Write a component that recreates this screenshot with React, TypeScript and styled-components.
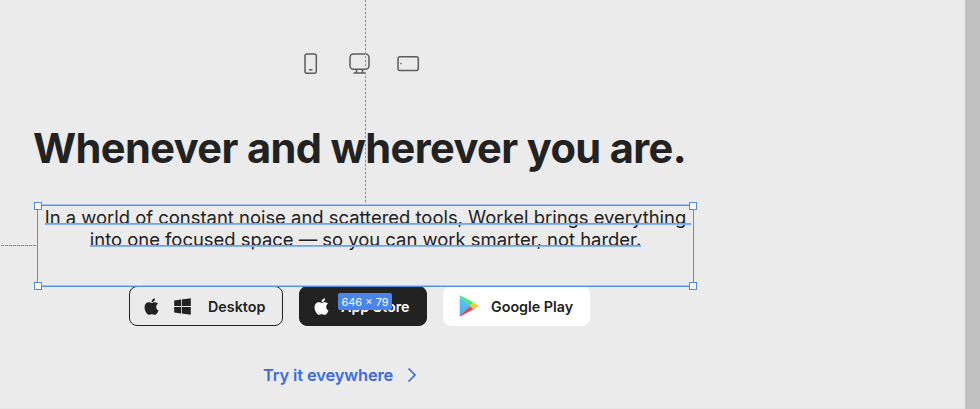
import React from "react";
import styled, { createGlobalStyle } from "styled-components";
import { FaApple, FaWindows } from "react-icons/fa";

const GlobalStyle = createGlobalStyle`
  *, *::before, *::after { box-sizing: border-box; }
  body { margin: 0; background: #ebebeb; font-family: Inter, sans-serif; overflow: hidden; }
`;

const Workspace = styled.div`
  display: flex;
  width: 980px;
  height: 409px;
  background: #c1c1c1;
`;

const Artboard = styled.main`
  position: relative;
  width: 965px;
  height: 409px;
  padding: 52px 0 0 34px;
  background: #ebebeb;
  color: #222;
`;

const Devices = styled.div`
  display: flex;
  align-items: center;
  height: 23px;
  padding-left: 269px;
  svg { display: block; }
`;

const Gap = styled.div<{ $w: number }>`
  width: ${(p) => p.$w}px;
`;

const Title = styled.h1`
  margin: 48px 0 0 -1px;
  height: 50px;
  font-size: 41.6px;
  line-height: 50px;
  font-weight: 700;
  letter-spacing: -0.62px;
  white-space: nowrap;
`;

const Selection = styled.section`
  position: relative;
  z-index: 2;
  margin: 32px 0 0 3px;
  width: 657px;
  height: 82px;
  border: 1px solid #4f91eb;
  box-shadow: 0 -1px 0 #a5c5f0, inset 0 -1px 0 #a5c5f0;
`;

const Handle = styled.i<{ $right?: boolean; $bottom?: boolean }>`
  position: absolute;
  width: 8px;
  height: 8px;
  background: #fff;
  border: 1px solid #4c8ee9;
  ${(p) => (p.$right ? "right: -4px;" : "left: -4px;")}
  ${(p) => (p.$bottom ? "bottom: -4px;" : "top: -4px;")}
`;

const Copy = styled.p`
  display: flex;
  flex-direction: column;
  align-items: center;
  margin: 0;
  font-size: 18.43px;
  line-height: 22.4px;
  font-weight: 420;
  white-space: nowrap;
`;

const Line = styled.span<{ $tail?: number }>`
  position: relative;
  &::after {
    content: "";
    position: absolute;
    left: 0;
    right: ${(p) => -(p.$tail ?? 0)}px;
    top: 17px;
    height: 2px;
    background: linear-gradient(#6ba3ee 50%, #86b3ef 50%);
  }
`;

const SizeBadge = styled.span`
  position: absolute;
  left: 300px;
  top: 87px;
  width: 54px;
  height: 17px;
  padding-top: 1px;
  border-radius: 2px;
  background: #4a86ea;
  color: #f4f8ff;
  font-size: 11px;
  line-height: 17px;
  text-align: center;
  white-space: nowrap;
`;

const Guide = styled.i<{ $vertical?: boolean }>`
  position: absolute;
  z-index: 1;
  ${(p) =>
    p.$vertical
      ? "left: 365px; top: 0; width: 1px; height: 205px; background: repeating-linear-gradient(to bottom, #5d94e4 0 2px, #cbdaf0 2px 4px);"
      : "left: 1px; top: 245px; width: 36px; height: 1px; background: repeating-linear-gradient(to right, #5d94e4 0 3px, #cbdaf0 3px 4px);"}
`;

const Stores = styled.div`
  display: flex;
  margin: -1px 0 0 95px;
  gap: 16px;
`;

const StoreButton = styled.button<{ $tone: "outline" | "dark" | "light"; $w: number }>`
  display: flex;
  align-items: center;
  width: ${(p) => p.$w}px;
  height: 40px;
  padding: 1px 0 0 ${(p) => (p.$tone === "light" ? 15 : 12)}px;
  border-radius: 8px;
  border: 1px solid ${(p) => (p.$tone === "light" ? "#fff" : "#222")};
  background: ${(p) => ({ outline: "transparent", dark: "#222", light: "#fff" })[p.$tone]};
  color: ${(p) => (p.$tone === "dark" ? "#fff" : "#222")};
  font: 600 14.3px/20px Inter, sans-serif;
  white-space: nowrap;
  svg { display: block; flex: none; margin-top: -1px; }
`;

const TryLink = styled.a`
  display: flex;
  align-items: center;
  margin: 38px 0 0 229px;
  height: 22px;
  color: #3d6be0;
  font-size: 16.5px;
  letter-spacing: -0.15px;
  line-height: 22px;
  font-weight: 600;
  white-space: nowrap;
`;

const BottomEdge = styled.div`
  position: absolute;
  left: 0;
  right: 0;
  bottom: 0;
  height: 1px;
  background: #e6e6e6;
`;

const PlayLogo = () => (
  <svg width="20" height="22" viewBox="0 0 20 22">
    <defs>
      <linearGradient id="sky" x1="0" y1="0" x2="0" y2="1">
        <stop offset="0" stopColor="#5bc8f7" />
        <stop offset="1" stopColor="#4aa9f0" />
      </linearGradient>
    </defs>
    <path d="M.7.9v20.2L10.7 11z" fill="url(#sky)" />
    <path d="M.7.9Q1.300.5 2 .8L14.300 7.600 10.700 11z" fill="#45e57d" />
    <path d="M14.300 7.600 18.800 10.200Q19.800 11 18.800 11.700L14.300 14.300 10.700 11z" fill="#fbc72c" />
    <path d="M.7 21.100Q1.200 21.500 2 21.200L14.300 14.300 10.700 11z" fill="#ee4452" />
  </svg>
);

export default function App() {
  return (
    <Workspace>
      <GlobalStyle />
      <Artboard>
        <Devices>
          <svg width="16" height="23" viewBox="0 0 16 23" fill="none" stroke="#5c5c5c" strokeWidth="1.5">
            <rect x="2" y="2" width="11.300" height="19.200" rx="2" />
            <path d="M6 17.800h3.500" />
          </svg>
          <Gap $w={29} />
          <svg width="24" height="23" viewBox="0 0 24 23" fill="none" stroke="#5c5c5c" strokeWidth="1.5">
            <rect x="2" y="2" width="19" height="15.200" rx="3.500" />
            <path d="M8.500 17.500v3M14.500 17.500v3M5.500 20.900h12" />
          </svg>
          <Gap $w={24} />
          <svg width="24" height="23" viewBox="0 0 24 23" fill="none" stroke="#5c5c5c" strokeWidth="1.5">
            <rect x="2" y="4.700" width="20.300" height="13.800" rx="2" />
            <path d="M4.300 11.500h1.300" />
          </svg>
        </Devices>
        <Title>Whenever and wherever you are.</Title>
        <Selection>
          <Copy>
            <Line $tail={5}>In a world of constant noise and scattered tools, Workel brings everything</Line>
            <Line>into one focused space — so you can work smarter, not harder.</Line>
          </Copy>
          <Handle />
          <Handle $right />
          <Handle $bottom />
          <Handle $right $bottom />
          <SizeBadge>646 × 79</SizeBadge>
        </Selection>
        <Stores>
          <StoreButton $tone="outline" $w={154}>
            <FaApple size={19} />
            <Gap $w={12} />
            <FaWindows size={19} />
            <Gap $w={16} />
            Desktop
          </StoreButton>
          <StoreButton $tone="dark" $w={128}>
            <FaApple size={19} />
            <Gap $w={10} />
            App Store
          </StoreButton>
          <StoreButton $tone="light" $w={147}>
            <PlayLogo />
            <Gap $w={12} />
            Google Play
          </StoreButton>
        </Stores>
        <TryLink>
          Try it eveywhere
          <Gap $w={14} />
          <svg width="10" height="16" viewBox="0 0 10 16" fill="none" stroke="currentColor" strokeWidth="1.700">
            <path d="m1.500 1.500 6.500 6.500-6.500 6.500" />
          </svg>
        </TryLink>
        <Guide $vertical />
        <Guide />
        <BottomEdge />
      </Artboard>
    </Workspace>
  );
}
